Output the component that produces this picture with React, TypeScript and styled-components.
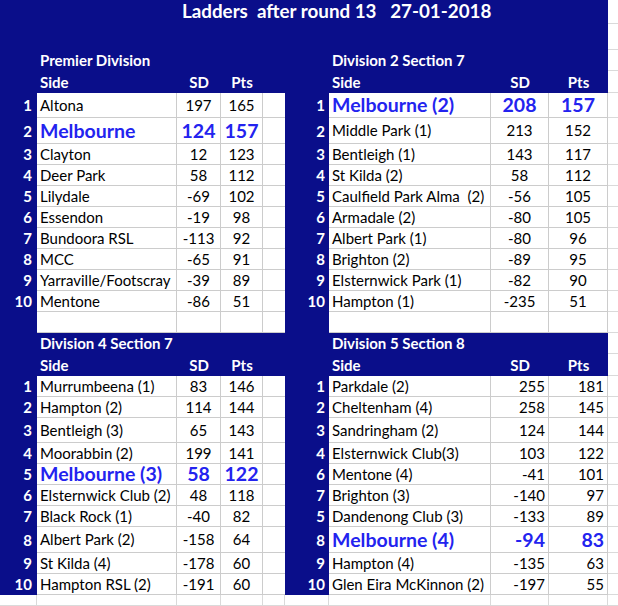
import React from 'react';
import styled, { createGlobalStyle } from 'styled-components';

const NAVY = '#0a0e8a';
const GRID = '#cccccc';
const SHEET_GRID = '#dadada';
const HILITE = '#2323ef';
const FONT = `Lato, "Liberation Sans", Arial, sans-serif`;

type Align = 'left' | 'center' | 'right';

interface Team {
  rank: string;
  side: string;
  sd: string;
  pts: string;
  hi?: boolean;
}

interface Division {
  title: string;
  numAlign: Align;
  teams: Team[];
}

const GlobalStyle = createGlobalStyle`
  html, body {
    margin: 0;
    padding: 0;
    background: #ffffff;
  }
  body {
    font-family: ${FONT};
    -webkit-font-smoothing: antialiased;
  }
`;

const Sheet = styled.div`
  width: 618px;
  height: 606px;
  overflow: hidden;
  background: #ffffff;
`;

const Row = styled.div<{ $h: number }>`
  display: grid;
  grid-template-columns: 37px 140px 44px 42px 22px 44px 162px 58px 59px 80px;
  height: ${(p) => p.$h}px;
  line-height: 1;
`;

const Fill = styled.div<{ $span?: number }>`
  grid-column: span ${(p) => p.$span ?? 1};
  background: ${NAVY};
`;

const Margin = styled.div`
  background: #ffffff;
  box-sizing: border-box;
  border-right: 1px solid ${SHEET_GRID};
  border-bottom: 1px solid ${SHEET_GRID};
`;

const Title = styled.div`
  grid-column: span 9;
  background: ${NAVY};
  color: #ffffff;
  font-size: 18.8px;
  font-weight: 700;
  white-space: pre;
  display: flex;
  align-items: center;
  padding: 0 0 2px 182px;
`;

const DivisionName = styled.div<{ $span: number }>`
  grid-column: span ${(p) => p.$span};
  background: ${NAVY};
  color: #ffffff;
  font-size: 15px;
  font-weight: 700;
  white-space: nowrap;
  display: flex;
  align-items: center;
  padding-left: 3px;
`;

const justify = (a: Align) =>
  a === 'left' ? 'flex-start' : a === 'right' ? 'flex-end' : 'center';

const Head = styled.div<{ $align: Align }>`
  background: ${NAVY};
  color: #ffffff;
  font-size: 15px;
  font-weight: 700;
  display: flex;
  align-items: center;
  justify-content: ${(p) => justify(p.$align)};
  padding-left: ${(p) => (p.$align === 'left' ? 3 : 0)}px;
`;

const Rank = styled.div<{ $pad: number }>`
  background: ${NAVY};
  color: #ffffff;
  font-size: 15px;
  font-weight: 700;
  display: flex;
  align-items: center;
  justify-content: flex-end;
  padding-right: ${(p) => p.$pad}px;
`;

const Cell = styled.div<{ $align?: Align; $hi?: boolean; $open?: boolean }>`
  background: #ffffff;
  box-sizing: border-box;
  border-bottom: 1px solid ${GRID};
  border-right: ${(p) => (p.$open ? 'none' : `1px solid ${GRID}`)};
  display: flex;
  align-items: center;
  justify-content: ${(p) => justify(p.$align ?? 'center')};
  padding: ${(p) => (p.$align === 'left' ? '0 0 0 3px' : p.$align === 'right' ? '0 3px 0 0' : '0')};
  color: ${(p) => (p.$hi ? HILITE : '#000000')};
  font-size: ${(p) => (p.$hi ? 19.5 : 15)}px;
  font-weight: ${(p) => (p.$hi ? 700 : 400)};
  white-space: pre;
`;

const premier: Division = {
  title: 'Premier Division',
  numAlign: 'center',
  teams: [
    { rank: '1', side: 'Altona', sd: '197', pts: '165' },
    { rank: '2', side: 'Melbourne', sd: '124', pts: '157', hi: true },
    { rank: '3', side: 'Clayton', sd: '12', pts: '123' },
    { rank: '4', side: 'Deer Park', sd: '58', pts: '112' },
    { rank: '5', side: 'Lilydale', sd: '-69', pts: '102' },
    { rank: '6', side: 'Essendon', sd: '-19', pts: '98' },
    { rank: '7', side: 'Bundoora RSL', sd: '-113', pts: '92' },
    { rank: '8', side: 'MCC', sd: '-65', pts: '91' },
    { rank: '9', side: 'Yarraville/Footscray', sd: '-39', pts: '89' },
    { rank: '10', side: 'Mentone', sd: '-86', pts: '51' },
  ],
};

const div2: Division = {
  title: 'Division 2 Section 7',
  numAlign: 'center',
  teams: [
    { rank: '1', side: 'Melbourne (2)', sd: '208', pts: '157', hi: true },
    { rank: '2', side: 'Middle Park (1)', sd: '213', pts: '152' },
    { rank: '3', side: 'Bentleigh (1)', sd: '143', pts: '117' },
    { rank: '4', side: 'St Kilda (2)', sd: '58', pts: '112' },
    { rank: '5', side: 'Caulfield Park Alma  (2)', sd: '-56', pts: '105' },
    { rank: '6', side: 'Armadale (2)', sd: '-80', pts: '105' },
    { rank: '7', side: 'Albert Park (1)', sd: '-80', pts: '96' },
    { rank: '8', side: 'Brighton (2)', sd: '-89', pts: '95' },
    { rank: '9', side: 'Elsternwick Park (1)', sd: '-82', pts: '90' },
    { rank: '10', side: 'Hampton (1)', sd: '-235', pts: '51' },
  ],
};

const div4: Division = {
  title: 'Division 4 Section 7',
  numAlign: 'center',
  teams: [
    { rank: '1', side: 'Murrumbeena (1)', sd: '83', pts: '146' },
    { rank: '2', side: 'Hampton (2)', sd: '114', pts: '144' },
    { rank: '3', side: 'Bentleigh (3)', sd: '65', pts: '143' },
    { rank: '4', side: 'Moorabbin (2)', sd: '199', pts: '141' },
    { rank: '5', side: 'Melbourne (3)', sd: '58', pts: '122', hi: true },
    { rank: '6', side: 'Elsternwick Club (2)', sd: '48', pts: '118' },
    { rank: '7', side: 'Black Rock (1)', sd: '-40', pts: '82' },
    { rank: '8', side: 'Albert Park (2)', sd: '-158', pts: '64' },
    { rank: '9', side: 'St Kilda (4)', sd: '-178', pts: '60' },
    { rank: '10', side: 'Hampton RSL (2)', sd: '-191', pts: '60' },
  ],
};

const div5: Division = {
  title: 'Division 5 Section 8',
  numAlign: 'right',
  teams: [
    { rank: '1', side: 'Parkdale (2)', sd: '255', pts: '181' },
    { rank: '2', side: 'Cheltenham (4)', sd: '258', pts: '145' },
    { rank: '3', side: 'Sandringham (2)', sd: '124', pts: '144' },
    { rank: '4', side: 'Elsternwick Club(3)', sd: '103', pts: '122' },
    { rank: '6', side: 'Mentone (4)', sd: '-41', pts: '101' },
    { rank: '7', side: 'Brighton (3)', sd: '-140', pts: '97' },
    { rank: '5', side: 'Dandenong Club (3)', sd: '-133', pts: '89' },
    { rank: '8', side: 'Melbourne (4)', sd: '-94', pts: '83', hi: true },
    { rank: '9', side: 'Hampton (4)', sd: '-135', pts: '63' },
    { rank: '10', side: 'Glen Eira McKinnon (2)', sd: '-197', pts: '55' },
  ],
};

const TOP_HEIGHTS = [25, 26, 21, 21, 21, 21, 21, 21, 21, 21];
const BOTTOM_HEIGHTS = [21, 21, 25, 21, 21, 21, 21, 26, 21, 21];

const TeamCells: React.FC<{ team: Team; align: Align; rankPad: number }> = ({ team, align, rankPad }) => (
  <>
    <Rank $pad={rankPad}>{team.rank}</Rank>
    <Cell $align="left" $hi={team.hi}>{team.side}</Cell>
    <Cell $align={align} $hi={team.hi}>{team.sd}</Cell>
    <Cell $align={align} $hi={team.hi}>{team.pts}</Cell>
  </>
);

const Band: React.FC<{ left: Division; right: Division; heights: number[]; blankRow?: boolean }> = ({
  left,
  right,
  heights,
  blankRow,
}) => (
  <>
    <Row $h={21}>
      <Fill />
      <DivisionName $span={4}>{left.title}</DivisionName>
      <Fill />
      <DivisionName $span={3}>{right.title}</DivisionName>
      <Margin />
    </Row>
    <Row $h={22}>
      <Fill />
      <Head $align="left">Side</Head>
      <Head $align="center">SD</Head>
      <Head $align="center">Pts</Head>
      <Fill $span={2} />
      <Head $align="left">Side</Head>
      <Head $align="center">SD</Head>
      <Head $align="center">Pts</Head>
      <Margin />
    </Row>
    {heights.map((h, i) => (
      <Row $h={h} key={i}>
        <TeamCells team={left.teams[i]} align={left.numAlign} rankPad={5} />
        <Cell $open />
        <TeamCells team={right.teams[i]} align={right.numAlign} rankPad={4} />
        <Margin />
      </Row>
    ))}
    {blankRow && (
      <Row $h={21}>
        <Fill />
        <Cell />
        <Cell />
        <Cell />
        <Cell $open />
        <Fill />
        <Cell />
        <Cell />
        <Cell />
        <Margin />
      </Row>
    )}
  </>
);

export default function App() {
  return (
    <>
      <GlobalStyle />
      <Sheet>
        <Row $h={24}>
          <Title>{'Ladders  after round 13   27-01-2018'}</Title>
          <Margin />
        </Row>
        <Row $h={26}>
          <Fill $span={9} />
          <Margin />
        </Row>
        <Band left={premier} right={div2} heights={TOP_HEIGHTS} blankRow />
        <Band left={div4} right={div5} heights={BOTTOM_HEIGHTS} />
        <Row $h={11}>
          {Array.from({ length: 10 }, (_, i) => (
            <Margin key={i} />
          ))}
        </Row>
      </Sheet>
    </>
  );
}
